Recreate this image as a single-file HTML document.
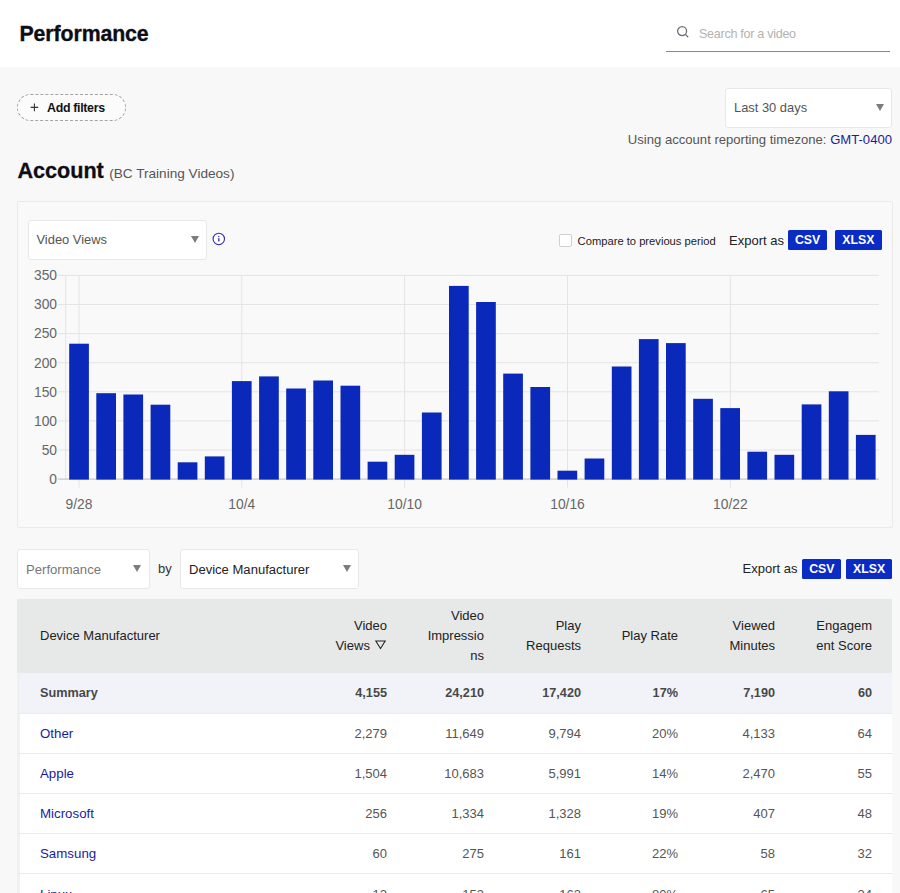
<!DOCTYPE html>
<html lang="en">
<head>
<meta charset="utf-8">
<title>Performance</title>
<style>
  html, body { margin: 0; padding: 0; }
  body {
    width: 900px; height: 893px; overflow: hidden; position: relative;
    background: #f8f8f8; color: #333;
    font-family: "Liberation Sans", sans-serif; font-size: 13px;
  }
  .abs { position: absolute; white-space: nowrap; }
  header { position: absolute; left: 0; top: 0; width: 900px; height: 67px; background: #fff; }
  h1 { position: absolute; margin: 0; left: 19.5px; top: 21.4px; font-size: 21.3px; line-height: 26px; font-weight: bold; color: #0d0d14; letter-spacing: -0.1px; -webkit-text-stroke: 0.35px #0d0d14; white-space: nowrap; }
  .search { position: absolute; left: 666px; top: 14px; width: 224px; height: 37px; border-bottom: 1px solid #8a8a8a; }
  .search svg { position: absolute; left: 10px; top: 11px; }
  .search span { position: absolute; left: 33px; top: 9.7px; font-size: 12.6px; letter-spacing: -0.3px; line-height: 20px; color: #b3b3b3; white-space: nowrap; }

  .addfilters { position: absolute; left: 17px; top: 94px; width: 107px; height: 25px; border: 1px dashed #a4a4a4; border-radius: 14px; background: #fbfbfb; }
  .addfilters .plus { position: absolute; left: 12px; top: 8px; }
  .addfilters b { position: absolute; left: 29px; top: 3px; font-size: 12.4px; letter-spacing: -0.32px; line-height: 20px; color: #111; white-space: nowrap; }

  .select { position: absolute; background: #fff; border: 1px solid #e8e8e8; border-radius: 3px; box-sizing: border-box; height: 40px; }
  .select span { position: absolute; left: 8px; top: 9.5px; line-height: 20px; white-space: nowrap; color: #555; }
  .select i { position: absolute; right: 7.5px; top: 15px; width: 0; height: 0; border-left: 4px solid transparent; border-right: 4px solid transparent; border-top: 7.6px solid #7c7c7c; }

  .tz { right: 8px; top: 130px; font-size: 13.1px; line-height: 20px; color: #555; }
  .tz a, a { color: #1b1ba0; text-decoration: none; }

  h2 { position: absolute; margin: 0; left: 17.4px; top: 157.2px; font-size: 21.6px; line-height: 28px; color: #0d0d14; white-space: nowrap; -webkit-text-stroke: 0.3px #0d0d14; }
  h2 small { font-size: 13.6px; font-weight: normal; color: #555; margin-left: -0.5px; -webkit-text-stroke: 0; letter-spacing: 0; }

  .panel { position: absolute; left: 17px; top: 201px; width: 873.5px; height: 325px; border: 1px solid #eaeaea; border-radius: 2px; background: #f9f9f9; }
  .btn { position: absolute; height: 20px; background: #0b2bc5; color: #fff; font-weight: bold; font-size: 12.3px; line-height: 20px; text-align: center; border-radius: 1.5px; }

  table { position: absolute; left: 17px; top: 599px; width: 875px; border-collapse: collapse; table-layout: fixed; font-size: 13px; }
  th { background: #e7e8e8; font-weight: normal; color: #222; text-align: right; padding: 0 20px 0 0; height: 74px; line-height: 20px; vertical-align: middle; }
  th:first-child, td:first-child { text-align: left; padding-left: 23px; }
  td { background: #fff; text-align: right; padding: 0 20px 0 0; height: 39px; border-bottom: 1px solid #ebebeb; color: #555; }
  td a { font-size: 13.3px; }
  tbody td:first-child { background: linear-gradient(to right, #f1f1f1 3px, #fff 3px); }
  tr.sum td:first-child { background: linear-gradient(to right, #f1f1f1 3px, #f2f3f9 3px); }
  tr.sum td { background: #f2f3f9; font-weight: bold; color: #484848; height: 40px; font-size: 12.7px; }
  tbody tr:last-child td { padding-top: 1px; }
</style>
</head>
<body>

<header>
  <h1>Performance</h1>
  <div class="search">
    <svg width="14" height="14" viewBox="0 0 14 14" fill="none" stroke="#6b6f76" stroke-width="1.3"><circle cx="6.1" cy="6.1" r="4.5"/><path d="M9.4 9.4 L12.2 12.2"/></svg>
    <span>Search for a video</span>
  </div>
</header>

<div class="addfilters">
  <svg class="plus" width="9" height="9" viewBox="0 0 9 9" stroke="#333" stroke-width="1.1"><path d="M4.4 0.6V8.2M0.6 4.4H8.2"/></svg>
  <b>Add filters</b>
</div>

<div class="select" style="left:725px;top:87.7px;width:167px;font-size:12.9px"><span>Last 30 days</span><i></i></div>
<div class="abs tz">Using account reporting timezone: <a>GMT-0400</a></div>

<h2>Account <small>(BC Training Videos)</small></h2>

<div class="panel"></div>
<div class="select" style="left:27.5px;top:219.5px;width:179.5px;font-size:12.9px"><span>Video Views</span><i></i></div>
<svg class="abs" style="left:212px;top:232px" width="14" height="14" viewBox="0 0 14 14"><circle cx="6.8" cy="6.9" r="5.7" fill="#fff" stroke="#3b33ad" stroke-width="1.15"/><circle cx="6.8" cy="4.5" r="0.7" fill="#3b33ad"/><rect x="6.1" y="6.2" width="1.4" height="3.2" fill="#3b33ad"/></svg>

<div class="abs" style="left:559px;top:233.7px;width:11px;height:11px;border:1px solid #cfcfcf;border-radius:2px;background:#fff"></div>
<div class="abs" style="left:577.6px;top:230.5px;font-size:11.2px;line-height:20px;color:#222">Compare to previous period</div>
<div class="abs" style="left:729px;top:230.5px;font-size:13px;line-height:20px;color:#222">Export as</div>
<div class="btn" style="left:788px;top:229.6px;width:39.2px">CSV</div>
<div class="btn" style="left:834.8px;top:229.6px;width:47px">XLSX</div>

<!-- chart -->
<svg class="abs" style="left:0;top:262px" width="900" height="262" viewBox="0 262 900 262" font-family="Liberation Sans, sans-serif" font-size="13.8" fill="#666">
  <g stroke="#e4e4e4" stroke-width="1">
    <path d="M58 275.4H879M58 304.5H879M58 333.6H879M58 362.7H879M58 391.8H879M58 420.9H879M58 450.0H879"/>
    <path d="M65.7 275V479M79 275V487.5M241.8 275V487.5M404.6 275V487.5M567.5 275V487.5M730.3 275V487.5"/>
  </g>
  <path d="M58 479.1H879" stroke="#bdbdbd" stroke-width="1"/>
  <g fill="#0a28ba" id="bars"><rect x="69.2" y="343.7" width="19.7" height="135.9"/><rect x="96.3" y="393.2" width="19.7" height="86.4"/><rect x="123.4" y="394.5" width="19.7" height="85.1"/><rect x="150.6" y="404.7" width="19.7" height="74.9"/><rect x="177.7" y="462.3" width="19.7" height="17.3"/><rect x="204.8" y="456.4" width="19.7" height="23.2"/><rect x="231.9" y="381.1" width="19.7" height="98.5"/><rect x="259.1" y="376.4" width="19.7" height="103.2"/><rect x="286.2" y="388.5" width="19.7" height="91.1"/><rect x="313.3" y="380.5" width="19.7" height="99.1"/><rect x="340.5" y="385.7" width="19.7" height="93.9"/><rect x="367.6" y="461.7" width="19.7" height="17.9"/><rect x="394.7" y="454.8" width="19.7" height="24.8"/><rect x="421.9" y="412.5" width="19.7" height="67.1"/><rect x="449.0" y="285.9" width="19.7" height="193.7"/><rect x="476.1" y="302.0" width="19.7" height="177.6"/><rect x="503.2" y="373.6" width="19.7" height="106.0"/><rect x="530.4" y="387.0" width="19.7" height="92.6"/><rect x="557.5" y="470.7" width="19.7" height="8.9"/><rect x="584.6" y="458.5" width="19.7" height="21.1"/><rect x="611.8" y="366.5" width="19.7" height="113.1"/><rect x="638.9" y="339.1" width="19.7" height="140.5"/><rect x="666.0" y="343.1" width="19.7" height="136.5"/><rect x="693.2" y="398.8" width="19.7" height="80.8"/><rect x="720.3" y="408.1" width="19.7" height="71.5"/><rect x="747.4" y="451.7" width="19.7" height="27.9"/><rect x="774.5" y="454.8" width="19.7" height="24.8"/><rect x="801.7" y="404.4" width="19.7" height="75.2"/><rect x="828.8" y="391.3" width="19.7" height="88.3"/><rect x="855.9" y="434.9" width="19.7" height="44.7"/></g>
  <g text-anchor="end">
    <text x="57" y="280.2">350</text><text x="57" y="309.3">300</text><text x="57" y="338.4">250</text><text x="57" y="367.5">200</text><text x="57" y="396.6">150</text><text x="57" y="425.7">100</text><text x="57" y="454.8">50</text><text x="57" y="483.9">0</text>
  </g>
  <g text-anchor="middle">
    <text x="79" y="508.9">9/28</text><text x="241.8" y="508.9">10/4</text><text x="404.6" y="508.9">10/10</text><text x="567.5" y="508.9">10/16</text><text x="730.3" y="508.9">10/22</text>
  </g>
</svg>

<div class="select" style="left:17px;top:549px;width:132.5px;font-size:13.1px"><span style="color:#777">Performance</span><i></i></div>
<div class="abs" style="left:158px;top:559px;font-size:13px;line-height:20px;color:#333">by</div>
<div class="select" style="left:180px;top:549px;width:179px;font-size:13.05px"><span style="color:#222">Device Manufacturer</span><i></i></div>
<div class="abs" style="left:742.6px;top:559.3px;font-size:13px;line-height:20px;color:#222">Export as</div>
<div class="btn" style="left:802.2px;top:559px;width:39.2px">CSV</div>
<div class="btn" style="left:845.8px;top:559px;width:46.5px">XLSX</div>

<table>
  <colgroup><col style="width:293px"><col style="width:97px"><col style="width:97px"><col style="width:97px"><col style="width:97px"><col style="width:97px"><col style="width:97px"></colgroup>
  <thead>
    <tr>
      <th>Device Manufacturer</th>
      <th>Video<br>Views <svg width="11" height="10" viewBox="0 0 11 10" style="vertical-align:0px;margin:0 1px 0 1.5px"><path d="M0.8 1H10.2L5.5 8.6Z" fill="none" stroke="#222" stroke-width="1.05"/></svg></th>
      <th>Video<br>Impressio<br>ns</th>
      <th>Play<br>Requests</th>
      <th>Play Rate</th>
      <th>Viewed<br>Minutes</th>
      <th>Engagem<br>ent Score</th>
    </tr>
  </thead>
  <tbody>
    <tr class="sum"><td>Summary</td><td>4,155</td><td>24,210</td><td>17,420</td><td>17%</td><td>7,190</td><td>60</td></tr>
    <tr><td><a>Other</a></td><td>2,279</td><td>11,649</td><td>9,794</td><td>20%</td><td>4,133</td><td>64</td></tr>
    <tr><td><a>Apple</a></td><td>1,504</td><td>10,683</td><td>5,991</td><td>14%</td><td>2,470</td><td>55</td></tr>
    <tr><td><a>Microsoft</a></td><td>256</td><td>1,334</td><td>1,328</td><td>19%</td><td>407</td><td>48</td></tr>
    <tr><td><a>Samsung</a></td><td>60</td><td>275</td><td>161</td><td>22%</td><td>58</td><td>32</td></tr>
    <tr><td><a>Linux</a></td><td>13</td><td>153</td><td>163</td><td>80%</td><td>65</td><td>34</td></tr>
  </tbody>
</table>

</body>
</html>
